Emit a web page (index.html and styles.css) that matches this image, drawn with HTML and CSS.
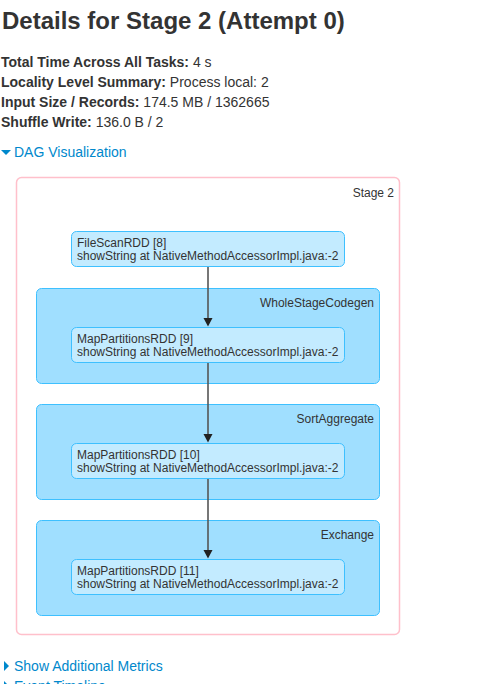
FILE: index.html
```html
<!DOCTYPE html>
<html lang="en">
<head>
  <meta charset="UTF-8">
  <meta name="viewport" content="width=device-width, initial-scale=1.0">
  <title>Stage 2</title>
  <link rel="stylesheet" href="styles.css">
</head>

<body>
  <div class="container">
    <h3>Details for Stage 2 (Attempt 0)</h3>

    <ul class="summary">
      <li><strong>Total Time Across All Tasks:</strong> 4 s</li>
      <li><strong>Locality Level Summary:</strong> Process local: 2</li>
      <li><strong>Input Size / Records:</strong> 174.5 MB / 1362665</li>
      <li><strong>Shuffle Write:</strong> 136.0 B / 2</li>
    </ul>

    <a class="toggle" href="#dag"><span class="arrow arrow-open"></span>DAG Visualization</a>

    <svg class="dag" width="484" height="486" viewBox="0 0 484 486">
      <g class="cluster stage">
        <rect x="16.5" y="7.5" width="383" height="457" rx="5" ry="5"></rect>
        <text x="394" y="27" text-anchor="end">Stage 2</text>
      </g>

      <g class="cluster">
        <rect x="36.5" y="118.5" width="343" height="95" rx="5" ry="5"></rect>
        <text x="374" y="137" text-anchor="end">WholeStageCodegen</text>
      </g>
      <g class="cluster">
        <rect x="36.5" y="234.5" width="343" height="95" rx="5" ry="5"></rect>
        <text x="374" y="253" text-anchor="end">SortAggregate</text>
      </g>
      <g class="cluster">
        <rect x="36.5" y="350.5" width="343" height="95" rx="5" ry="5"></rect>
        <text x="374" y="369" text-anchor="end">Exchange</text>
      </g>

      <g class="node">
        <rect x="71.5" y="61.5" width="273" height="35" rx="5" ry="5"></rect>
        <text x="77" y="76.5">FileScanRDD [8]</text>
        <text x="77" y="89.5">showString at NativeMethodAccessorImpl.java:-2</text>
      </g>
      <g class="node">
        <rect x="71.5" y="157.5" width="273" height="35" rx="5" ry="5"></rect>
        <text x="77" y="172.5">MapPartitionsRDD [9]</text>
        <text x="77" y="185.5">showString at NativeMethodAccessorImpl.java:-2</text>
      </g>
      <g class="node">
        <rect x="71.5" y="273.5" width="273" height="35" rx="5" ry="5"></rect>
        <text x="77" y="288.5">MapPartitionsRDD [10]</text>
        <text x="77" y="301.5">showString at NativeMethodAccessorImpl.java:-2</text>
      </g>
      <g class="node">
        <rect x="71.5" y="389.5" width="273" height="35" rx="5" ry="5"></rect>
        <text x="77" y="404.5">MapPartitionsRDD [11]</text>
        <text x="77" y="417.5">showString at NativeMethodAccessorImpl.java:-2</text>
      </g>

      <g class="edges">
        <path class="edge" d="M208 97 L208 149"></path>
        <path class="head" d="M203.5 148 L212.5 148 L208 156.5 Z"></path>
        <path class="edge" d="M208 193 L208 265"></path>
        <path class="head" d="M203.5 264 L212.5 264 L208 272.5 Z"></path>
        <path class="edge" d="M208 309 L208 381"></path>
        <path class="head" d="M203.5 380 L212.5 380 L208 388.5 Z"></path>
      </g>
    </svg>

    <a class="toggle" href="#metrics"><span class="arrow arrow-closed"></span>Show Additional Metrics</a>
    <a class="toggle" href="#timeline"><span class="arrow arrow-closed"></span>Event Timeline</a>
  </div>
</body>
</html>
```

FILE: styles.css
```css
body {
  margin: 0;
  font-family: "Liberation Sans", Helvetica, Arial, sans-serif;
  font-size: 14px;
  line-height: 20px;
  color: #333;
  background: #fff;
}

.container {
  padding: 0 0 0 1px;
}

h3 {
  margin: 8px 0 18px 1px;
  font-size: 24px;
  line-height: 1.1;
  font-weight: bold;
}

.summary {
  list-style: none;
  margin: 0 0 10px;
  padding: 0;
}

.summary strong {
  font-weight: bold;
}

.toggle {
  display: flex;
  align-items: center;
  color: #0088cc;
  text-decoration: none;
}

.arrow {
  display: inline-block;
  width: 0;
  height: 0;
  margin-right: 3px;
}

.arrow-open {
  border-left: 5px solid transparent;
  border-right: 5px solid transparent;
  border-top: 5px solid #0088cc;
  margin-left: 0;
}

.arrow-closed {
  border-top: 5px solid transparent;
  border-bottom: 5px solid transparent;
  border-left: 5px solid #0088cc;
  margin-left: 3px;
  margin-right: 5px;
}

.dag {
  display: block;
  margin-left: -1px;
  margin-top: 8px;
}

.dag text {
  font-family: "Liberation Sans", Helvetica, Arial, sans-serif;
  font-size: 12px;
  fill: #333;
}

.dag .cluster rect {
  fill: #a0dfff;
  stroke: #3ec0ff;
  stroke-width: 1px;
}

.dag .cluster.stage rect {
  fill: #fff;
  stroke: #ffc0cb;
  stroke-width: 1.5px;
}

.dag .node rect {
  fill: #c3ebff;
  stroke: #3ec0ff;
  stroke-width: 1px;
}

.dag .edge {
  stroke: #555;
  stroke-width: 1.6px;
  fill: none;
}

.dag .head {
  fill: #222;
}
```
